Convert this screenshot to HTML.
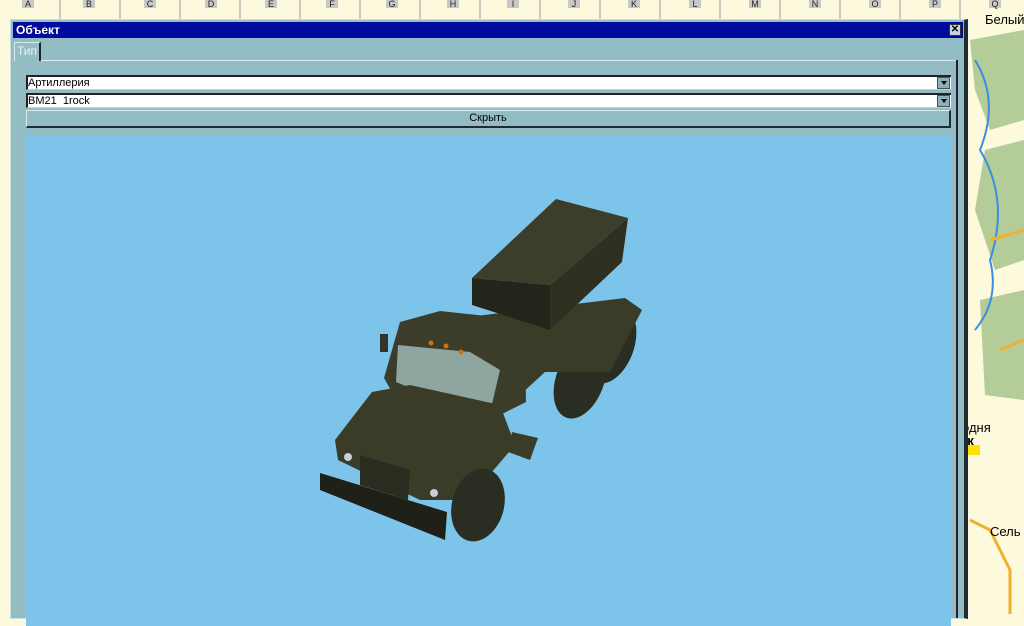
<!DOCTYPE html>
<html><head><meta charset="utf-8"><style>
*{box-sizing:border-box}
body{margin:0;width:1024px;height:614px;overflow:hidden;background:#fdf9dc;position:relative;font-family:"Liberation Sans",sans-serif}
.lbl{position:absolute;top:0;width:12px;height:8px;background:#c8c8c8;font-size:9px;line-height:8px;text-align:center;color:#222}
.win{position:absolute;left:10px;top:19px;width:958px;height:600px;background:#94bcc4;border:1px solid #c8e0e6;border-right:4px solid #1c2c30}
.title{position:absolute;left:2px;top:2px;right:1px;height:16px;background:#000a9c;color:#fff;font-weight:bold;font-size:12px;line-height:16px;padding-left:3px}
.x{position:absolute;right:2px;top:2px;width:12px;height:12px;background:#c8d4d8;border:1px solid #333;color:#000;font-size:10px;line-height:10px;text-align:center}
.tab{position:absolute;left:3px;top:22px;width:27px;height:19px;border-left:1px solid #d8ecf0;border-top:1px solid #d8ecf0;border-right:2px solid #223;color:#e8f4f6;font-size:12px;line-height:17px;padding-left:2px}
.line{position:absolute;left:30px;right:8px;top:40px;height:1px;background:#d8ecf0}
.rb{position:absolute;right:6px;top:40px;width:2px;bottom:0;background:#223}
.combo{position:absolute;left:15px;width:925px;height:15px;background:#fff;border-top:2px solid #222;border-left:2px solid #222;border-bottom:1px solid #ccc;font-size:11px;line-height:12px;color:#000}
.arr{position:absolute;right:1px;top:0px;width:13px;height:12px;background:#8ab0b8;border:1px solid #455}
.arr:after{content:"";position:absolute;left:3px;top:3px;border:3px solid transparent;border-top:4px solid #000}
.btn{position:absolute;left:15px;top:90px;width:925px;height:18px;background:#94bcc4;border-top:1px solid #d8ecf0;border-left:1px solid #d8ecf0;border-bottom:2px solid #1c2c30;border-right:2px solid #1c2c30;text-align:center;font-size:11px;line-height:15px}
.view{position:absolute;left:15px;top:116px;width:925px;height:490px;background:#7dc4ea}
</style></head><body>
<svg style="position:absolute;left:0;top:0" width="1024" height="614">
<path d="M970 40 L1024 30 L1024 120 L990 130 L975 90Z M985 150 L1024 140 L1024 260 L995 270 L975 210Z M980 300 L1024 290 L1024 400 L985 395Z" fill="#b4cc98"/>
<path d="M975 60 Q1000 100 980 150 Q1010 200 990 260 Q1000 300 975 330" stroke="#3a8ee0" stroke-width="2" fill="none"/>
<path d="M970 520 L990 530 L1010 570 L1010 614" stroke="#f0b030" stroke-width="3" fill="none"/>
<path d="M990 240 L1024 230 M1000 350 L1024 340" stroke="#f0b030" stroke-width="3"/>
<rect x="968" y="445" width="12" height="10" fill="#ffe000"/>
<text x="985" y="24" font-size="13" font-family="Liberation Sans">Белый</text>
<text x="962" y="432" font-size="13" font-family="Liberation Sans">одня</text>
<text x="960" y="445" font-size="13" font-weight="bold" font-family="Liberation Sans">ск</text>
<text x="990" y="536" font-size="13" font-family="Liberation Sans">Сель</text>
<path d="M60 0V19 M120 0V19 M180 0V19 M240 0V19 M300 0V19 M360 0V19 M420 0V19 M480 0V19 M540 0V19 M600 0V19 M660 0V19 M720 0V19 M780 0V19 M840 0V19 M900 0V19 M960 0V19" stroke="#999"/>
</svg>
<div class="lbl" style="left:22px">A</div><div class="lbl" style="left:83px">B</div><div class="lbl" style="left:144px">C</div><div class="lbl" style="left:205px">D</div><div class="lbl" style="left:265px">E</div><div class="lbl" style="left:326px">F</div><div class="lbl" style="left:386px">G</div><div class="lbl" style="left:447px">H</div><div class="lbl" style="left:507px">I</div><div class="lbl" style="left:568px">J</div><div class="lbl" style="left:628px">K</div><div class="lbl" style="left:689px">L</div><div class="lbl" style="left:749px">M</div><div class="lbl" style="left:809px">N</div><div class="lbl" style="left:869px">O</div><div class="lbl" style="left:929px">P</div><div class="lbl" style="left:989px">Q</div>
<div class="win">
<div class="title">Объект<div class="x">✕</div></div>
<div class="tab">Тип</div><div class="line"></div><div class="rb"></div>
<div class="combo" style="top:55px">Артиллерия<div class="arr"></div></div>
<div class="combo" style="top:73px">BM21 &nbsp;1rock<div class="arr"></div></div>
<div class="btn">Скрыть</div>
<div class="view"></div>
</div>
<svg style="position:absolute;left:0;top:0" width="1024" height="614">
<ellipse cx="610" cy="345" rx="24" ry="40" transform="rotate(20 610 345)" fill="#2a2d22"/>
<ellipse cx="580" cy="380" rx="24" ry="40" transform="rotate(20 580 380)" fill="#2a2d22"/>
<polygon points="460,318 625,298 642,310 610,372 545,372 520,395 480,380" fill="#3a3c27"/>
<polygon points="472,278 556,199 628,218 550,285" fill="#3c3d2a"/>
<polygon points="550,285 628,218 622,262 550,330" fill="#2f3022"/>
<polygon points="472,278 550,285 550,330 472,305" fill="#23241a"/>
<polygon points="400,322 440,311 505,318 525,352 526,402 500,415 392,392 384,378" fill="#3b3d2a"/>
<polygon points="398,345 470,352 500,370 492,404 440,400 396,382" fill="#8fa6a0"/>
<polygon points="335,440 372,392 410,385 500,405 515,445 468,500 420,500 338,460" fill="#3a3c28"/>
<polygon points="360,455 410,470 408,500 360,485" fill="#2b2c1f"/>
<polygon points="320,473 447,512 445,540 320,490" fill="#1f2018"/>
<ellipse cx="478" cy="505" rx="26" ry="37" transform="rotate(15 478 505)" fill="#2a2d22"/>
<polygon points="512,432 538,438 530,460 508,452" fill="#3a3c28"/>
<circle cx="431" cy="343" r="2.5" fill="#d07010"/><circle cx="446" cy="346" r="2.5" fill="#d07010"/><circle cx="461" cy="352" r="2.5" fill="#d07010"/>
<rect x="380" y="334" width="8" height="18" fill="#33352a"/>
<circle cx="348" cy="457" r="4" fill="#ccd"/><circle cx="434" cy="493" r="4" fill="#ccd"/>
</svg>
</body></html>
